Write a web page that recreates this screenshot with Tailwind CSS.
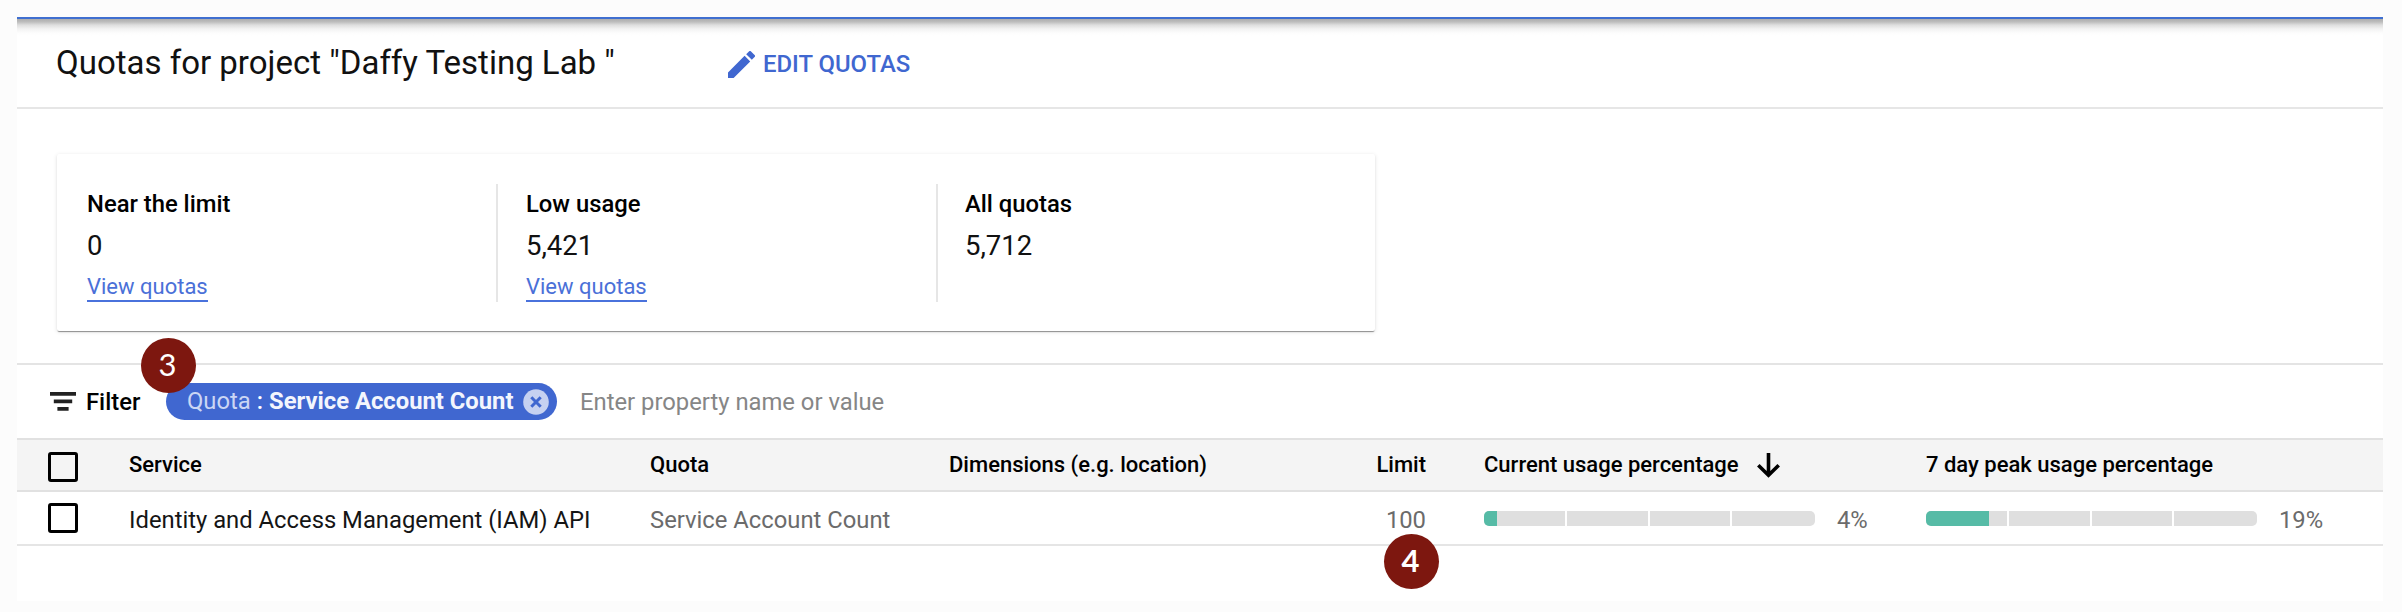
<!DOCTYPE html>
<html lang="en">
<head>
<meta charset="utf-8">
<title>Quotas</title>
<script src="https://cdn.jsdelivr.net/npm/@tailwindcss/browser@4"></script>
</head>
<body class="h-[612px] overflow-hidden bg-[#fcfcfc] pl-[17px] pt-[17px] pr-[19px] text-[#111] [font-family:Roboto,sans-serif]">
<main class="relative flex h-[584px] flex-col bg-white">
  <div class="h-[2px] shrink-0 bg-[#3f6fd0]"></div>
  <header class="flex h-[90px] shrink-0 items-center border-b-2 border-[#e6e6e6] bg-[linear-gradient(to_bottom,#adadad_0px,#bebebe_3px,#dedede_6px,#f3f3f3_10px,#fdfdfd_14px,#fff_17px)] pl-[39px]">
    <h1 class="w-[672px] whitespace-pre text-[33px] leading-[40px]">Quotas for project "Daffy Testing Lab "</h1>
    <div class="flex items-center text-[#4067d0]">
      <svg class="mt-[2px] size-[27px]" viewBox="3 3 18 18" fill="currentColor"><path d="M3 17.25V21h3.75L17.81 9.94l-3.75-3.75L3 17.25zM20.71 7.04a1 1 0 0 0 0-1.41l-2.34-2.34a1 1 0 0 0-1.41 0l-1.83 1.83 3.75 3.75 1.83-1.83z"/></svg>
      <span class="ml-[8px] mt-[2px] text-[23.9px] leading-[30px] font-medium">EDIT QUOTAS</span>
    </div>
  </header>

  <section class="h-[254px] shrink-0 pl-[40px] pt-[45px]">
    <div class="flex h-[177px] w-[1318px] rounded-[2px] bg-white pt-[30px] shadow-[0_2px_1px_-1px_rgba(0,0,0,.3),0_1px_1px_rgba(0,0,0,.14),0_1px_4px_rgba(0,0,0,.12)]">
      <div class="h-[118px] w-[441px] border-r-2 border-[#e6e6e6] pl-[30px]">
        <div class="pt-[5px] text-[23.8px] leading-[30px] font-medium text-black">Near the limit</div>
        <div class="mt-[9px] text-[27.5px] leading-[36px]">0</div>
        <a class="mt-[7px] inline-block h-[31px] border-b-2 border-[#4a72dc] text-[22px] leading-[32px] text-[#4a70d8]">View quotas</a>
      </div>
      <div class="h-[118px] w-[440px] border-r-2 border-[#e6e6e6] pl-[28px]">
        <div class="pt-[5px] text-[23.8px] leading-[30px] font-medium text-black">Low usage</div>
        <div class="mt-[9px] text-[27.5px] leading-[36px]">5,421</div>
        <a class="mt-[7px] inline-block h-[31px] border-b-2 border-[#4a72dc] text-[22px] leading-[32px] text-[#4a70d8]">View quotas</a>
      </div>
      <div class="pl-[27px]">
        <div class="pt-[5px] text-[23.8px] leading-[30px] font-medium text-black">All quotas</div>
        <div class="mt-[9px] text-[27.5px] leading-[36px]">5,712</div>
      </div>
    </div>
  </section>

  <div class="flex h-[75px] shrink-0 items-center border-t-2 border-[#e4e4e4] pl-[33px]">
    <svg class="h-[19px] w-[26px]" viewBox="0 0 26 19" fill="#222"><path d="M0 0h26v3.7H0zM3.8 7.5h18.4v3.7H3.8zM7.4 15h11.2v3.7H7.4z"/></svg>
    <span class="ml-[10px] w-[80px] text-[23.8px] leading-[30px] font-medium text-black">Filter</span>
    <div class="flex h-[37px] w-[391px] items-center rounded-full bg-[#4067d0] pl-[21px] text-[23.8px] text-white">
      <span class="w-[82px] whitespace-nowrap text-[#cbd6f4]">Quota <span class="font-medium text-white">:</span></span>
      <span class="w-[254px] whitespace-nowrap font-bold text-[#f3f6fd]">Service Account Count</span>
      <svg class="size-[26px]" viewBox="0 0 26 26"><circle cx="13" cy="13" r="12.8" fill="#c6d1f1"/><path d="M8.3 8.3l9.4 9.4M17.7 8.3l-9.4 9.4" stroke="#4067d0" stroke-width="3"/></svg>
    </div>
    <span class="ml-[23px] text-[23.8px] leading-[30px] text-[#868686]">Enter property name or value</span>
  </div>

  <div class="grid h-[54px] shrink-0 grid-cols-[112px_521px_299px_477px_58px_442px_1fr] items-center border-y-2 border-[#e1e1e1] bg-[#f4f4f4] text-[22px] leading-[30px] font-medium text-black">
    <div class="mt-[4px] ml-[31px] size-[30px] rounded-[3px] border-[3px] border-black"></div>
    <div>Service</div>
    <div>Quota</div>
    <div>Dimensions (e.g. location)</div>
    <div class="-ml-[58px] w-[58px] justify-self-start text-right">Limit</div>
    <div class="flex items-center">Current usage percentage
      <svg class="ml-[18px] h-[25px] w-[23px]" viewBox="0 0 23 25" fill="none" stroke="#000" stroke-width="3.6"><path d="M11.5 0v22M1.3 12.2l10.2 10 10.2-10"/></svg>
    </div>
    <div>7 day peak usage percentage</div>
  </div>

  <div class="grid h-[54px] shrink-0 grid-cols-[112px_521px_299px_477px_58px_442px_1fr] items-center border-b-2 border-[#e5e5e5] text-[23.8px] leading-[30px] text-[#6b6b6b]">
    <div class="ml-[31px] size-[30px] rounded-[3px] border-[3px] border-black"></div>
    <div class="pt-[3px] text-[#151515]">Identity and Access Management (IAM) API</div>
    <div class="pt-[3px]">Service Account Count</div>
    <div></div>
    <div class="-ml-[58px] w-[58px] justify-self-start pt-[3px] text-right">100</div>
    <div class="flex items-center">
      <div class="relative h-[15px] w-[331px] overflow-hidden rounded-[5px] bg-[#dfdfdf]">
        <div class="h-full bg-[#56bba6]" style="width:4%"></div>
        <div class="absolute inset-0 grid grid-cols-4"><i class="border-r-2 border-white"></i><i class="border-r-2 border-white"></i><i class="border-r-2 border-white"></i></div>
      </div>
      <span class="ml-[22px] pt-[3px]">4%</span>
    </div>
    <div class="flex items-center">
      <div class="relative h-[15px] w-[331px] overflow-hidden rounded-[5px] bg-[#dfdfdf]">
        <div class="h-full bg-[#56bba6]" style="width:19%"></div>
        <div class="absolute inset-0 grid grid-cols-4"><i class="border-r-2 border-white"></i><i class="border-r-2 border-white"></i><i class="border-r-2 border-white"></i></div>
      </div>
      <span class="ml-[22px] pt-[3px]">19%</span>
    </div>
  </div>

  <!-- numbered callouts -->
  <div class="absolute left-[124px] top-[321px] size-[55px] rounded-full bg-[#7d170f] pr-[2px] text-center text-[31px] leading-[53px] text-white [font-family:Lato,sans-serif]">3</div>
  <div class="absolute left-[1367px] top-[517px] size-[55px] rounded-full bg-[#7d170f] pr-[2px] text-center text-[31px] leading-[53px] font-bold text-white [font-family:Lato,sans-serif]">4</div>
</main>
</body>
</html>
